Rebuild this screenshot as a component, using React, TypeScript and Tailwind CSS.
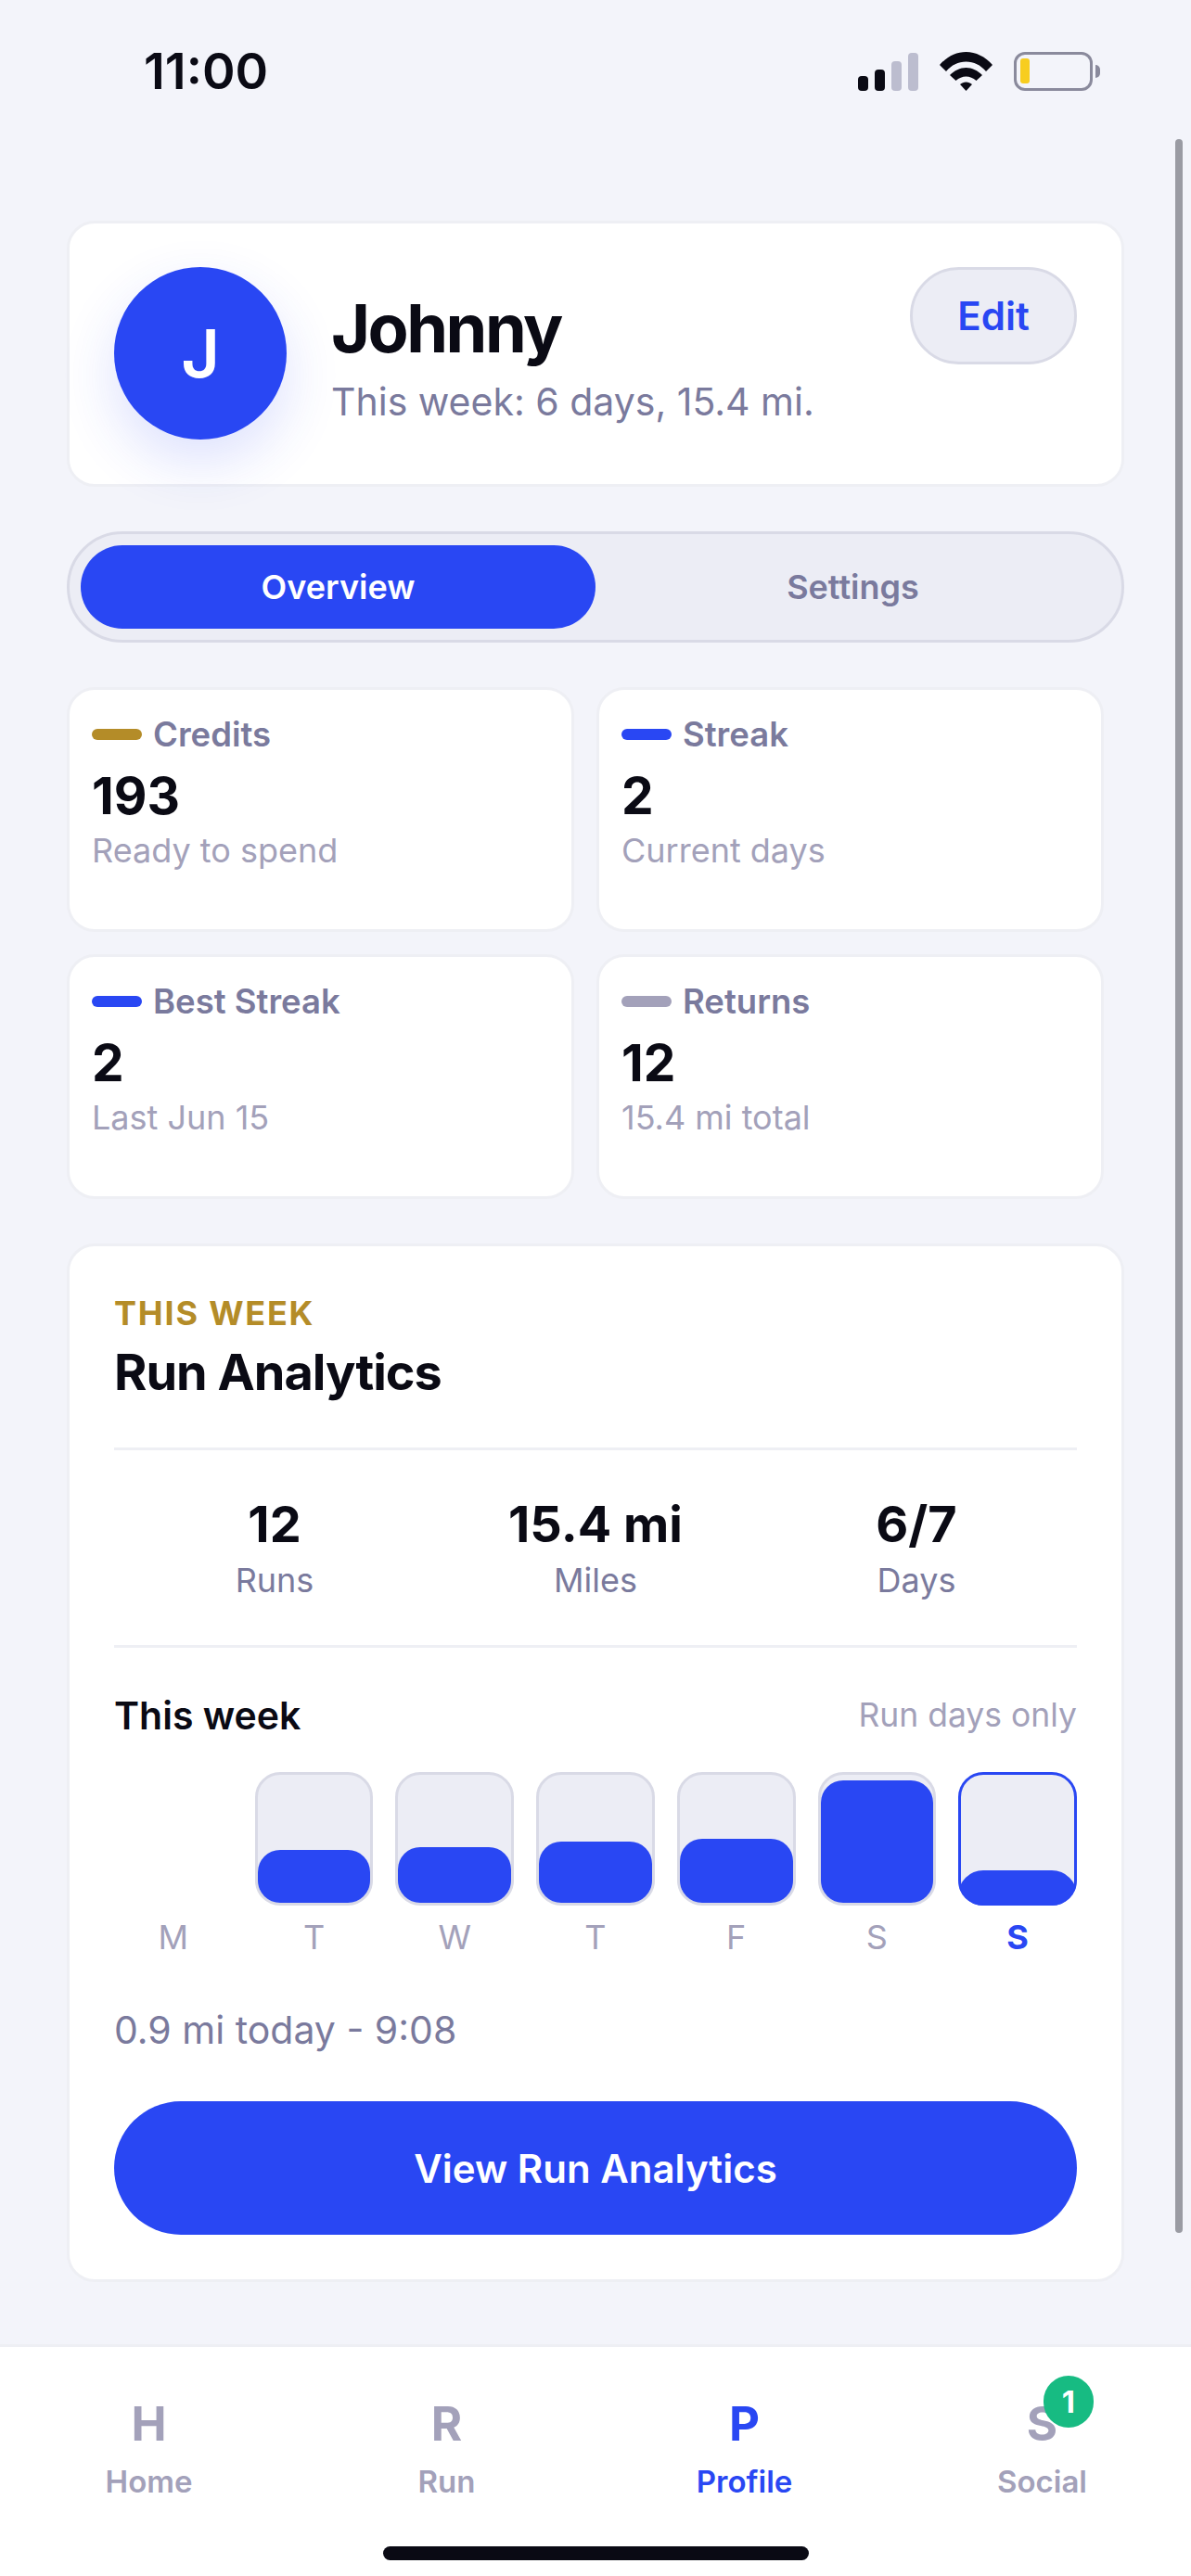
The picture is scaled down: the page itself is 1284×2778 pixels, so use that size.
const stats = [
  { label: 'Credits', value: '193', sub: 'Ready to spend', dot: 'bg-[#b48c28]' },
  { label: 'Streak', value: '2', sub: 'Current days', dot: 'bg-[#2947f3]' },
  { label: 'Best Streak', value: '2', sub: 'Last Jun 15', dot: 'bg-[#2947f3]' },
  { label: 'Returns', value: '12', sub: '15.4 mi total', dot: 'bg-[#a3a1ba]' },
];

const totals = [
  { value: '12', label: 'Runs' },
  { value: '15.4 mi', label: 'Miles' },
  { value: '6/7', label: 'Days' },
];

const days = [
  { day: 'M', fill: '' },
  { day: 'T', fill: 'h-[57px]' },
  { day: 'W', fill: 'h-[60px]' },
  { day: 'T', fill: 'h-[66px]' },
  { day: 'F', fill: 'h-[69px]' },
  { day: 'S', fill: 'h-[132px]' },
  { day: 'S', fill: 'h-[38px]', today: true },
];

const tabs = [
  { letter: 'H', label: 'Home' },
  { letter: 'R', label: 'Run' },
  { letter: 'P', label: 'Profile', active: true },
  { letter: 'S', label: 'Social', badge: 1 },
];

const StatusBar = () => (
  <div className="flex h-[152px] items-center justify-between pl-[155px] pr-[98px] pt-[1px]">
    <span className="text-[54px] font-semibold leading-none text-[#0a0a14]">11:00</span>
    <div className="flex items-center gap-[23px]">
      <div className="flex h-[42px] items-end gap-[7px]">
        <div className="h-[16px] w-[11px] rounded-[4px] bg-[#0a0a14]" />
        <div className="h-[23px] w-[11px] rounded-[4px] bg-[#0a0a14]" />
        <div className="h-[32px] w-[11px] rounded-[4px] bg-[#bcbdcf]" />
        <div className="h-[41px] w-[11px] rounded-[4px] bg-[#bcbdcf]" />
      </div>
      <svg width="57" height="42" viewBox="0 0 57 42" fill="#0a0a14">
        <path d="M0 14C8 5 18 0 28.5 0C39 0 49 5 57 14L50 21C44 14 37 10.5 28.5 10.5C20 10.5 13 14 7 21Z" />
        <path d="M11 25C16 20 22 17 28.5 17C35 17 41 20 46 25L39.5 31C36 28 32.5 26.5 28.5 26.5C24.5 26.5 21 28 17.5 31Z" />
        <path d="M22 35C24 33.5 26 32.5 28.5 32.5C31 32.5 33 33.5 35 35L28.5 42Z" />
      </svg>
      <div className="flex items-center gap-[3px]">
        <div className="flex h-[42px] w-[85px] items-center rounded-[12px] border-[3px] border-[#8a8a9c] pl-[4px]">
          <div className="h-[27px] w-[10px] rounded-[3px] bg-[#f7cd1f]" />
        </div>
        <div className="h-[14px] w-[5px] rounded-r-full bg-[#8a8a9c]" />
      </div>
    </div>
  </div>
);

export default function App() {
  return (
    <div className="relative flex h-[2778px] w-[1284px] flex-col overflow-hidden bg-[#f3f4fa] [font-family:Inter,sans-serif]">
      <StatusBar />

      <div className="flex flex-1 flex-col px-[72px] pt-[86px]">
        <div className="flex items-start rounded-[30px] border-[3px] border-[#eeeff4] bg-white p-[48px] pt-[47px]">
          <div className="flex h-[186px] w-[186px] shrink-0 items-center justify-center rounded-full bg-[#2947f3] text-[72px] font-semibold text-white shadow-[0_24px_60px_rgba(42,70,245,0.16)]">
            J
          </div>
          <div className="ml-[48px] flex-1 pt-[24px]">
            <div className="text-[72px] font-bold leading-[84px] tracking-[-2.5px] text-[#0a0a14]">Johnny</div>
            <div className="mt-[12px] text-[41px] leading-[50px] text-[#7a7a9d]">This week: 6 days, 15.4 mi.</div>
          </div>
          <button className="flex h-[105px] w-[180px] items-center justify-center rounded-full border-[3px] border-[#d9dae6] bg-[#ecedf5] text-[42px] font-semibold text-[#2947f3]">
            Edit
          </button>
        </div>

        <div className="mt-[48px] grid h-[120px] grid-cols-2 rounded-full border-[3px] border-[#d9dae6] bg-[#ecedf5] p-[12px]">
          <div className="flex items-center justify-center rounded-full bg-[#2947f3] text-[36px] font-semibold text-white">Overview</div>
          <div className="flex items-center justify-center text-[36px] font-semibold text-[#7a7a9d]">Settings</div>
        </div>

        <div className="mt-[48px] grid w-[1118px] grid-cols-2 gap-[24px]">
          {stats.map((s) => (
            <div key={s.label} className="h-[264px] rounded-[30px] border-[3px] border-[#eeeff4] bg-white px-[24px] pt-[24px]">
              <div className="flex items-center gap-[12px] text-[36.5px] font-semibold leading-[48px] text-[#7a7a9d]">
                <span className={`h-[12px] w-[54px] rounded-full ${s.dot}`} />
                {s.label}
              </div>
              <div className="mt-[10px] text-[55px] font-bold leading-[64px] text-[#0a0a14]">{s.value}</div>
              <div className="mt-[5px] text-[36px] leading-[44px] text-[#a3a1ba]">{s.sub}</div>
            </div>
          ))}
        </div>

        <div className="mt-[48px] flex h-[1120px] flex-col rounded-[30px] border-[3px] border-[#eeeff4] bg-white px-[48px] pt-[50px]">
          <div className="text-[36px] font-bold leading-[44px] tracking-[1.8px] text-[#b48c28]">THIS WEEK</div>
          <div className="mt-[9px] text-[54px] font-bold leading-[66px] tracking-[-1px] text-[#0a0a14]">Run Analytics</div>

          <div className="mt-[48px] grid h-[216px] grid-cols-3 items-center border-y-[3px] border-[#eeeff4]">
            {totals.map((t) => (
              <div key={t.label} className="flex flex-col items-center">
                <div className="text-[54px] font-bold leading-[64px] text-[#0a0a14]">{t.value}</div>
                <div className="mt-[6px] text-[36px] leading-[44px] text-[#7a7a9d]">{t.label}</div>
              </div>
            ))}
          </div>

          <div className="mt-[48px] flex items-center justify-between">
            <span className="text-[41px] font-semibold leading-[50px] text-[#0a0a14]">This week</span>
            <span className="text-[35.5px] leading-[50px] text-[#a3a1ba]">Run days only</span>
          </div>

          <div className="mt-[36px] grid grid-cols-7 gap-[24px]">
            {days.map((d, i) => (
              <div key={i} className="flex flex-col items-center">
                {d.fill ? (
                  d.today ? (
                    <div className="flex h-[144px] w-full items-end overflow-hidden rounded-[27px] bg-[#ecedf5] shadow-[inset_0_0_0_3px_#2947f3]">
                      <div className={`w-full rounded-t-[27px] bg-[#2947f3] ${d.fill}`} />
                    </div>
                  ) : (
                    <div className="flex h-[144px] w-full items-end overflow-hidden rounded-[27px] border-[3px] border-[#d9dae6] bg-[#ecedf5]">
                      <div className={`w-full rounded-t-[24px] rounded-b-[15px] bg-[#2947f3] ${d.fill}`} />
                    </div>
                  )
                ) : (
                  <div className="h-[144px]" />
                )}
                <div className={`mt-[12px] text-[36px] leading-[44px] ${d.today ? 'font-bold text-[#2947f3]' : 'text-[#a3a1ba]'}`}>{d.day}</div>
              </div>
            ))}
          </div>

          <div className="mt-[53px] text-[41px] leading-[50px] text-[#7a7a9d]">0.9 mi today - 9:08</div>

          <button className="mt-[52px] flex h-[144px] items-center justify-center rounded-full bg-[#2947f3] text-[42px] font-semibold text-white">
            View Run Analytics
          </button>
        </div>
      </div>

      <div className="relative grid h-[250px] grid-cols-4 border-t-[3px] border-[#eeeff4] bg-white pt-[53px]">
        {tabs.map((t) => (
          <div key={t.label} className={`flex flex-col items-center ${t.active ? 'text-[#2947f3]' : 'text-[#a3a1ba]'}`}>
            <div className="relative text-[51px] font-bold leading-[60px]">
              {t.letter}
              {t.badge && (
                <span className="absolute left-[18px] top-[-22px] flex h-[56px] w-[54px] items-center justify-center rounded-full bg-[#17bb82] text-[33px] font-bold leading-none text-white">
                  {t.badge}
                </span>
              )}
            </div>
            <div className="mt-[12px] text-[33px] font-semibold leading-[40px]">{t.label}</div>
          </div>
        ))}
        <div className="absolute bottom-[17px] left-[413px] h-[15px] w-[459px] rounded-full bg-[#0a0a14]" />
      </div>

      <div className="absolute right-[9px] top-[150px] h-[2258px] w-[8px] rounded-full bg-[#9a9ba3]" />
    </div>
  );
}
